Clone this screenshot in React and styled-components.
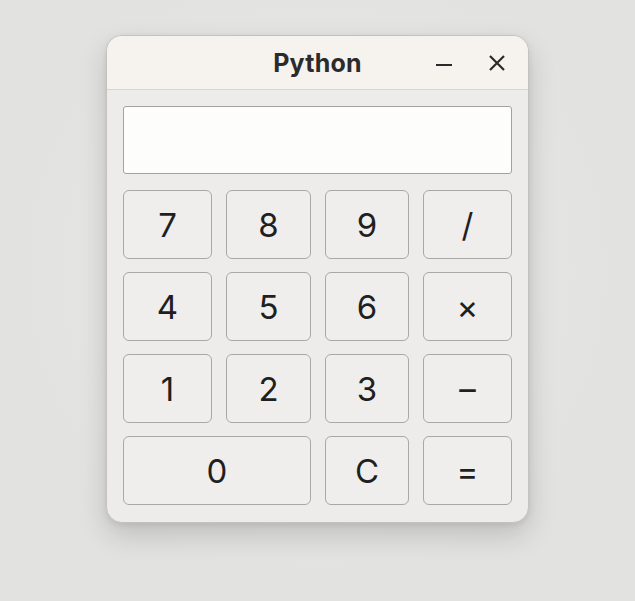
import React from 'react';
import styled, { createGlobalStyle } from 'styled-components';

const GlobalStyle = createGlobalStyle`
  html, body {
    margin: 0;
    padding: 0;
    background: #e4e4e3;
  }
  body {
    font-family: Inter, "Liberation Sans", sans-serif;
  }
`;

const Page = styled.div`
  width: 635px;
  height: 601px;
  padding: 35px 0 0 106px;
  box-sizing: border-box;
  background: radial-gradient(ellipse at 50% 45%, #e9e9e8 0%, #e2e2e1 70%);
`;

const Window = styled.div`
  width: 423px;
  height: 488px;
  box-sizing: border-box;
  border: 1px solid #c4c2bf;
  border-radius: 16px;
  overflow: hidden;
  background: #edecea;
  box-shadow: 0 12px 28px rgba(0, 0, 0, 0.16), 0 2px 6px rgba(0, 0, 0, 0.08);
  display: flex;
  flex-direction: column;
`;

const TitleBar = styled.div`
  height: 53px;
  flex: none;
  background: #f6f2ee;
  border-bottom: 1px solid #d9d6d2;
  display: grid;
  grid-template-columns: 1fr auto 1fr;
  align-items: center;
`;

const Title = styled.div`
  grid-column: 2;
  font-size: 25px;
  font-weight: 700;
  color: #2b2b2b;
  letter-spacing: 0.2px;
`;

const Controls = styled.div`
  grid-column: 3;
  justify-self: end;
  display: flex;
  align-items: center;
  gap: 37px;
  padding-right: 23px;
`;

const Icon = styled.svg`
  width: 16px;
  height: 16px;
  display: block;
`;

const Body = styled.div`
  flex: 1;
  padding: 16px;
  display: flex;
  flex-direction: column;
  gap: 16px;
`;

const Display = styled.div`
  height: 68px;
  box-sizing: border-box;
  border: 1px solid #a3a2a0;
  border-radius: 3px;
  background: #fdfdfc;
`;

const Keys = styled.div`
  display: grid;
  grid-template-columns: 89px 85px 84px 89px;
  grid-auto-rows: 69px;
  column-gap: 14px;
  row-gap: 13px;
`;

const Key = styled.button`
  grid-column: span ${(p) => p.$span || 1};
  box-sizing: border-box;
  border: 1px solid #a9a8a6;
  border-radius: 6px;
  background: #efeeec;
  color: #1f1f1f;
  font-family: Inter, "Liberation Sans", sans-serif;
  font-size: 33px;
  font-weight: 400;
  padding: 0;
  display: flex;
  align-items: center;
  justify-content: center;
  cursor: pointer;
`;

const keys = [
  { label: '7' }, { label: '8' }, { label: '9' }, { label: '/' },
  { label: '4' }, { label: '5' }, { label: '6' }, { label: '×' },
  { label: '1' }, { label: '2' }, { label: '3' }, { label: '–' },
  { label: '0', span: 2 }, { label: 'C' }, { label: '=' },
];

export default function App() {
  return (
    <>
      <GlobalStyle />
      <Page>
        <Window>
          <TitleBar>
            <Title>Python</Title>
            <Controls>
              <Icon viewBox="0 0 16 16">
                <line x1="0" y1="10" x2="16" y2="10" stroke="#2a2a2a" strokeWidth="2" />
              </Icon>
              <Icon viewBox="0 0 16 16">
                <path d="M1 1 L15 15 M15 1 L1 15" stroke="#2a2a2a" strokeWidth="2.2" />
              </Icon>
            </Controls>
          </TitleBar>
          <Body>
            <Display />
            <Keys>
              {keys.map((k) => (
                <Key key={k.label} $span={k.span}>{k.label}</Key>
              ))}
            </Keys>
          </Body>
        </Window>
      </Page>
    </>
  );
}
